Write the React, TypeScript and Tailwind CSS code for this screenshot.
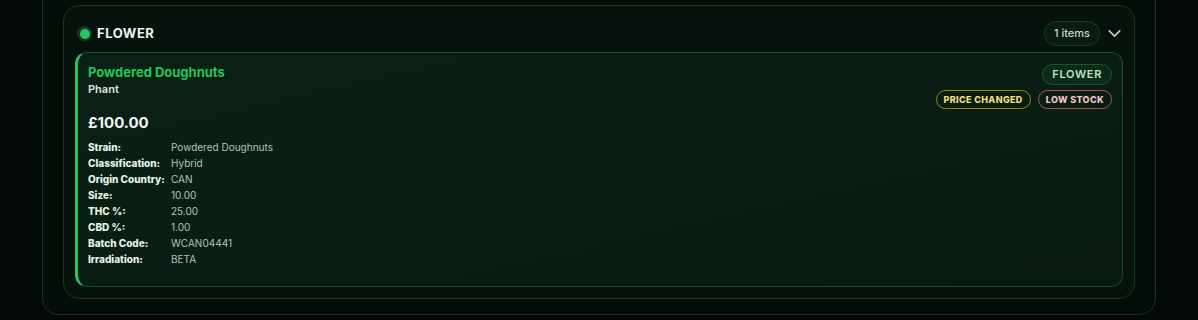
import { ChevronDown } from "lucide-react";

const details = [
  ["Strain:", "Powdered Doughnuts"],
  ["Classification:", "Hybrid"],
  ["Origin Country:", "CAN"],
  ["Size:", "10.00"],
  ["THC %:", "25.00"],
  ["CBD %:", "1.00"],
  ["Batch Code:", "WCAN04441"],
  ["Irradiation:", "BETA"],
];

export default function App() {
  return (
    <div
      className="h-[320px] w-[1198px] overflow-hidden bg-[radial-gradient(ellipse_at_top,#0a1d12_0%,#030a06_60%)] text-white"
      style={{ fontFamily: "Inter, 'Noto Sans', sans-serif" }}
    >
      <div className="mx-[42px] -mt-[20px] h-[335px] rounded-b-2xl border border-[#143322] bg-[#040d08] px-[20px] pt-[24px]">
        <section className="h-[294px] rounded-2xl border border-[#153822] bg-[#06120b] px-[11px] pt-[12px]">
          <header className="flex h-[31px] items-center justify-between pl-[2px]">
            <div className="flex items-center gap-[5px]">
              <span className="flex h-[15px] w-[15px] items-center justify-center rounded-full bg-[#0f3a20]">
                <span className="h-[10px] w-[10px] rounded-full bg-[#22c55e]" />
              </span>
              <h2 className="text-[13px] font-bold tracking-[0.04em] text-[#f0f5f1]">FLOWER</h2>
            </div>
            <div className="-mr-[2px] flex items-center gap-[4px]">
              <span className="rounded-full border border-[#173a25] bg-[#0a1c11] px-[9px] py-[3px] text-[11px] font-medium text-[#c7d8cc]">
                1 items
              </span>
              <ChevronDown className="h-[21px] w-[21px] text-[#b9d9c3]" strokeWidth={1.8} />
            </div>
          </header>
          <article className="mt-[3px] flex h-[235px] justify-between rounded-xl border border-[#1b4a2c] border-l-[3px] border-l-[#22c55e] bg-gradient-to-br from-[#0b2115] to-[#081a10] pl-[10px] pr-[10px] pt-[10px]">
            <div>
              <h3 className="text-[13px] font-bold leading-[18px] text-[#22c55e]">Powdered Doughnuts</h3>
              <p className="mt-0 text-[11px] font-semibold text-[#dfe7e2]">Phant</p>
              <p className="mt-[14px] text-[15px] font-bold text-[#f3f6f4]">£100.00</p>
              <dl className="mt-[7px] grid grid-cols-[83px_1fr] gap-y-[3px] text-[10px] leading-[13px]">
                {details.map(([k, v]) => (
                  <div key={k} className="contents">
                    <dt className="font-extrabold text-[#e4f3e8]">{k}</dt>
                    <dd className="text-[#b5c2ba]">{v}</dd>
                  </div>
                ))}
              </dl>
            </div>
            <div className="flex flex-col items-end gap-[5px] pt-[1px]">
              <span className="rounded-full border border-[#1f5233] bg-[#0d2a19] px-[9px] py-[1px] text-[11px] font-semibold tracking-[0.06em] text-[#b8e6c6]">
                FLOWER
              </span>
              <div className="flex gap-[7px]">
                <span className="rounded-full border border-[#9a8420] px-[7px] py-[2px] text-[9px] font-extrabold tracking-[0.04em] text-[#f3dd7a]">
                  PRICE CHANGED
                </span>
                <span className="rounded-full border border-[#a5545a] px-[7px] py-[2px] text-[9px] font-extrabold tracking-[0.04em] text-[#f5c2c8]">
                  LOW STOCK
                </span>
              </div>
            </div>
          </article>
        </section>
      </div>
    </div>
  );
}
